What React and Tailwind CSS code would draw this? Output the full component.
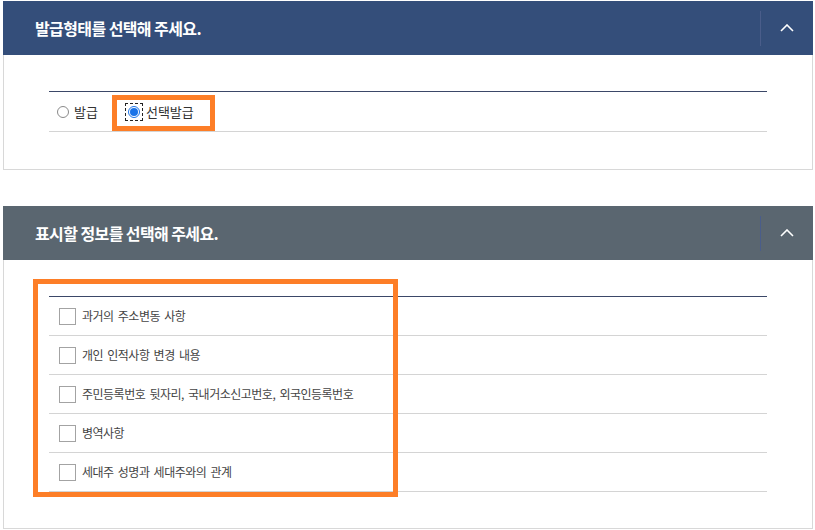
import React from "react";

const font = { fontFamily: '"Noto Sans CJK KR", "Noto Sans", sans-serif' };

function Chevron() {
  return (
    <svg width="14" height="8" viewBox="0 0 14 8" fill="none">
      <polyline points="1,7 7,1 13,7" stroke="#ffffff" strokeWidth="1.6" strokeLinejoin="miter" />
    </svg>
  );
}

function Header({ title, bg }) {
  return (
    <div className={`flex h-[54px] items-center ${bg}`}>
      <div className="flex-1 pl-[32px] text-[16px] font-bold tracking-[-0.6px] text-white">{title}</div>
      <div className="h-[35px] w-px bg-[#4a5d8a]" />
      <div className="flex w-[52px] items-center justify-center pb-[1px]">
        <Chevron />
      </div>
    </div>
  );
}

const items = [
  "과거의 주소변동 사항",
  "개인 인적사항 변경 내용",
  "주민등록번호 뒷자리, 국내거소신고번호, 외국인등록번호",
  "병역사항",
  "세대주 성명과 세대주와의 관계",
];

export default function App() {
  return (
    <div className="relative h-[530px] w-[815px] overflow-hidden bg-white pl-[3px] pr-[2px] pt-[1px]" style={font}>
      {/* Panel 1 */}
      <div>
        <Header title="발급형태를 선택해 주세요." bg="bg-[#344e7a]" />
        <div className="border-x border-b border-[#d8d8d8] px-[45px] pb-[37px] pt-[36px]">
          <div className="border-t border-[#3b4868]">
            <div className="flex h-[40px] items-center border-b border-[#d4d4d4] pl-[8px] text-[13px] text-[#333]">
              <span className="h-[12px] w-[12px] rounded-full border border-[#8a8a8a] bg-white" />
              <span className="ml-[5px]">발급</span>
              <span className="relative ml-[28px] flex h-[16px] w-[16px] items-center justify-center outline-1 outline-dashed outline-[#222]">
                <span className="flex h-[12px] w-[12px] items-center justify-center rounded-full border border-[#1a73e8] bg-white">
                  <span className="h-[8px] w-[8px] rounded-full bg-[#1a73e8]" />
                </span>
              </span>
              <span className="ml-[4px]">선택발급</span>
            </div>
          </div>
        </div>
      </div>

      {/* Panel 2 */}
      <div className="mt-[36px]">
        <Header title="표시할 정보를 선택해 주세요." bg="bg-[#5a6670]" />
        <div className="border-x border-b border-[#d8d8d8] px-[45px] pb-[36px] pt-[36px]">
          <div className="border-t border-[#3b4868]">
            {items.map((t) => (
              <div key={t} className="flex h-[39px] items-center border-b border-[#d4d4d4] pl-[10px] text-[12px] tracking-[-0.5px] [word-spacing:2px] text-[#444]">
                <span className="h-[17px] w-[17px] shrink-0 border border-[#a3a3a3] bg-white" />
                <span className="ml-[6px]">{t}</span>
              </div>
            ))}
          </div>
        </div>
      </div>

      {/* Orange annotation boxes */}
      <div className="pointer-events-none absolute left-[112px] top-[95px] h-[36px] w-[103px] border-[5px] border-[#fd7e27]" />
      <div className="pointer-events-none absolute left-[33px] top-[279px] h-[218px] w-[365px] border-[5px] border-[#fd7e27]" />
    </div>
  );
}
